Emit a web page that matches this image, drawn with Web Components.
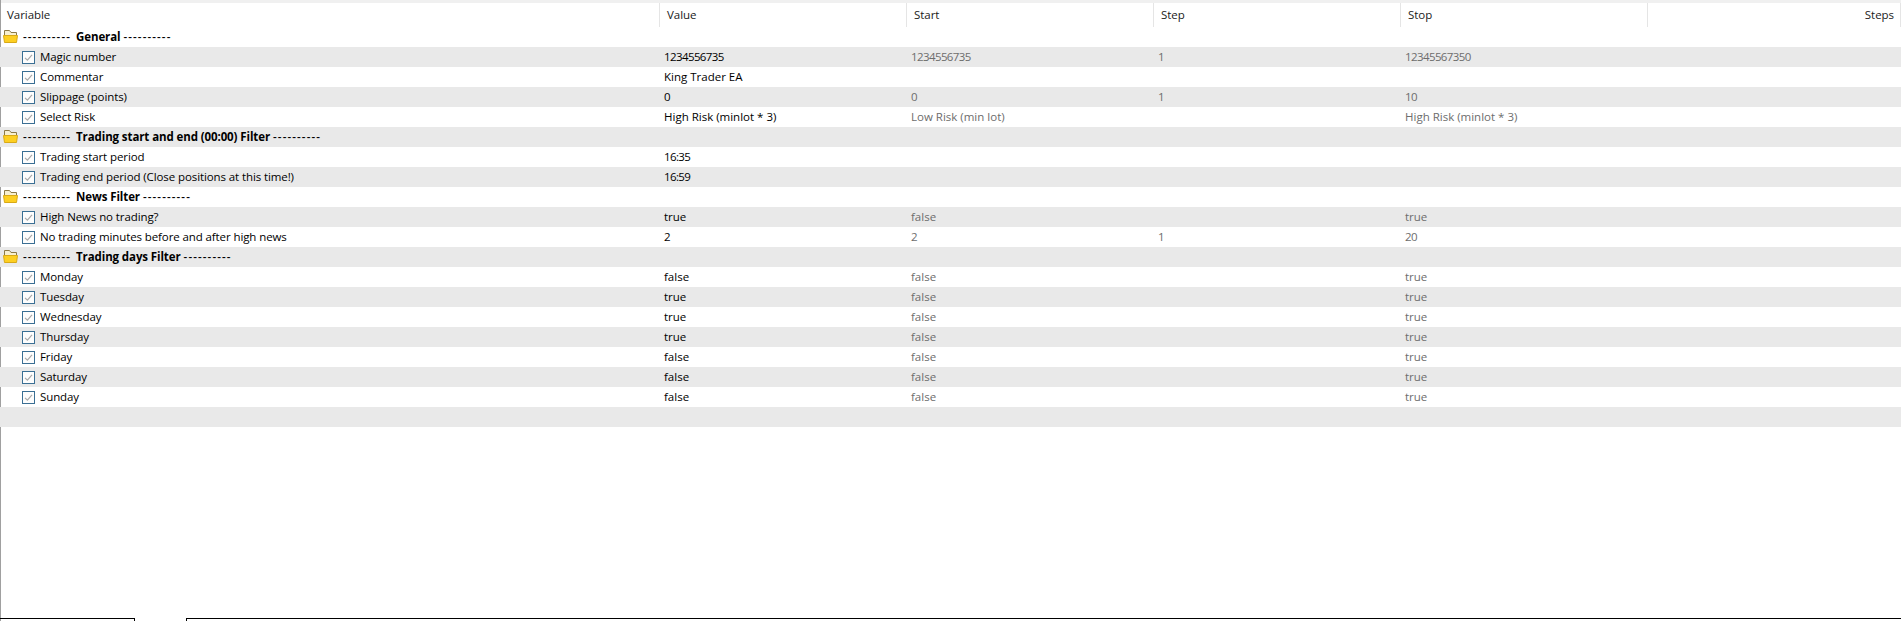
<!DOCTYPE html>
<html>
<head>
<meta charset="utf-8">
<title>Inputs</title>
<style>
  html, body { margin: 0; height: 100%; background: #fff; overflow: hidden; }
  body { font: 11.5px "Open Sans", "Liberation Sans", sans-serif; color: #000; }
</style>
</head>
<body>
<input-table></input-table>
<script>
const ROWS = [
  ['g', 'General'],
  ['p', 'Magic number', '1234556735', '1234556735', '1', '12345567350'],
  ['p', 'Commentar', 'King Trader EA'],
  ['p', 'Slippage (points)', '0', '0', '1', '10'],
  ['p', 'Select Risk', 'High Risk (minlot * 3)', 'Low Risk (min lot)', '', 'High Risk (minlot * 3)'],
  ['g', 'Trading start and end (00:00) Filter'],
  ['p', 'Trading start period', '16:35'],
  ['p', 'Trading end period (Close positions at this time!)', '16:59'],
  ['g', 'News Filter'],
  ['p', 'High News no trading?', 'true', 'false', '', 'true'],
  ['p', 'No trading minutes before and after high news', '2', '2', '1', '20'],
  ['g', 'Trading days Filter'],
  ['p', 'Monday', 'false', 'false', '', 'true'],
  ['p', 'Tuesday', 'true', 'false', '', 'true'],
  ['p', 'Wednesday', 'true', 'false', '', 'true'],
  ['p', 'Thursday', 'true', 'false', '', 'true'],
  ['p', 'Friday', 'false', 'false', '', 'true'],
  ['p', 'Saturday', 'false', 'false', '', 'true'],
  ['p', 'Sunday', 'false', 'false', '', 'true'],
  ['e']
];

const COLS = 'grid-template-columns: 660px 247px 247px 247px 247px 1fr;';

class InputTable extends HTMLElement {
  constructor() {
    super();
    const shadow = this.attachShadow({ mode: 'open' });
    shadow.innerHTML = `
      <style>
        :host { display: flex; flex-direction: column; height: 100vh; box-sizing: border-box; border-left: 1px solid #a0a0a0; }
        .top { height: 3px; background: #f0f0f0; flex: none; }
        .rows { flex: 1; }
      </style>
      <div class="top"></div>
      <table-head></table-head>
      <div class="rows"></div>
      <tab-line></tab-line>
    `;
    const rows = shadow.querySelector('.rows');
    ROWS.forEach((r, i) => {
      const row = document.createElement('input-row');
      row.setAttribute('kind', r[0]);
      row.dataset.cells = JSON.stringify(r.slice(1));
      if (i % 2 == 1) row.setAttribute('shade', '');
      rows.appendChild(row);
    });
  }
}

class TableHead extends HTMLElement {
  constructor() {
    super();
    const shadow = this.attachShadow({ mode: 'open' });
    shadow.innerHTML = `
      <style>
        :host { display: grid; ${COLS} height: 24px; margin-left: -1px; }
        div { padding: 0 7px; line-height: 24px; height: 24px; box-sizing: border-box; border-right: 1px solid #e5e5e5; color: #1a1a1a; letter-spacing: -.05px; }
        .r { text-align: right; padding-right: 6px; }
      </style>
      <div>Variable</div><div>Value</div><div>Start</div><div>Step</div><div>Stop</div><div class="r">Steps</div>
    `;
  }
}

// digits in Segoe are narrower than in Open Sans
function cell(text, dim) {
  const num = /^[\d:]+$/.test(text) ? ' num' : '';
  return `<div class="cell${dim ? ' dim' : ''}${num}">${text || ''}</div>`;
}

class InputRow extends HTMLElement {
  connectedCallback() {
    const shadow = this.shadowRoot || this.attachShadow({ mode: 'open' });
    const kind = this.getAttribute('kind');
    const c = JSON.parse(this.dataset.cells);
    let inner = '';
    if (kind == 'g') {
      inner = `<div class="name group"><folder-icon></folder-icon><span class="dash">----------</span><b>${c[0]}</b><span class="dash">----------</span></div>`;
    } else if (kind == 'p') {
      inner = `<div class="name param"><check-icon></check-icon><span class="label">${c[0]}</span></div>
        ${cell(c[1], false)}${cell(c[2], true)}${cell(c[3], true)}${cell(c[4], true)}`;
    }
    shadow.innerHTML = `
      <style>
        :host { display: grid; ${COLS} height: 20px; line-height: 20px; white-space: nowrap; margin-left: -1px; }
        :host([shade]) { background: #e9e9e9; }
        .name { display: flex; align-items: center; }
        .group { padding-left: 3px; }
        .param { padding-left: 22px; gap: 5px; }
        .label { letter-spacing: -.1px; }
        .dash { font-weight: 600; letter-spacing: 1.1px; }
        folder-icon { margin: -2px 5px 0 0; }
        b { font-weight: 700; margin: 0 3px 0 5px; letter-spacing: -.1px; }
        .cell { padding-left: 4px; }
        .num { letter-spacing: -.6px; }
        .dim { color: #6d6d6d; }
      </style>
      ${inner}
    `;
  }
}

class FolderIcon extends HTMLElement {
  constructor() {
    super();
    this.attachShadow({ mode: 'open' }).innerHTML = `
      <style>:host { display: block; width: 15px; height: 13px; flex: none; } svg { display: block; }</style>
      <svg width="15" height="13" viewBox="0 0 15 13">
        <path d="M1.5 7V.5h5l1.5 2h5.5V7" fill="#f7efd0" stroke="#8c7a48"/>
        <path d="M.5 5.5h14l-1 7h-12z" fill="#fdcf22" stroke="#d8a916"/>
      </svg>`;
  }
}

class CheckIcon extends HTMLElement {
  constructor() {
    super();
    this.attachShadow({ mode: 'open' }).innerHTML = `
      <style>:host { display: block; width: 13px; height: 13px; flex: none; } svg { display: block; }</style>
      <svg width="13" height="13" viewBox="0 0 13 13">
        <rect x="0.5" y="0.5" width="12" height="12" fill="#fdfdfd" stroke="#3a6f94"/>
        <path d="M3 6.8l2.4 2.4L10 3.8" fill="none" stroke="#a9a9a9" stroke-width="1.2"/>
      </svg>`;
  }
}

class TabLine extends HTMLElement {
  constructor() {
    super();
    this.attachShadow({ mode: 'open' }).innerHTML = `
      <style>
        :host { display: flex; height: 3px; flex: none; margin-left: -1px; }
        .a { width: 135px; border: solid #000; border-width: 1px 1px 0 0; box-sizing: border-box; }
        .b { flex: 1; margin-left: 51px; border: solid #000; border-width: 1px 0 0 1px; box-sizing: border-box; }
      </style>
      <div class="a"></div><div class="b"></div>`;
  }
}

customElements.define('folder-icon', FolderIcon);
customElements.define('check-icon', CheckIcon);
customElements.define('table-head', TableHead);
customElements.define('input-row', InputRow);
customElements.define('tab-line', TabLine);
customElements.define('input-table', InputTable);
</script>
</body>
</html>
